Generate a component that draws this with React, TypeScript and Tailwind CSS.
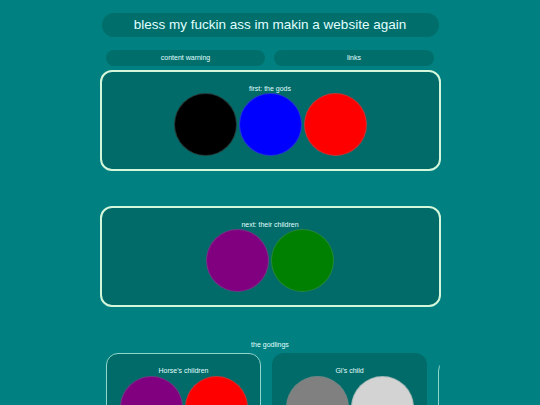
const font = { fontFamily: '"Liberation Sans", Arial, sans-serif' };

function Circle({ color }: { color: string }) {
  return <div className={`w-[63px] h-[63px] rounded-full shrink-0 border border-[#5a8f8c]/40 ${color}`} />;
}

function Section({ label, colors }: { label: string; colors: string[] }) {
  return (
    <div className="w-[341px] h-[101px] mx-auto rounded-[12px] border-2 border-[#d4f7dc] bg-[#006b68] flex flex-col items-center pt-[12px]">
      <p className="text-[7px] leading-[10px] text-[#e0ffff]">{label}</p>
      <div className="flex gap-[2px] mt-[-1px]">
        {colors.map((c) => (
          <Circle key={c} color={c} />
        ))}
      </div>
    </div>
  );
}

function Card({ label, colors, border }: { label: string; colors: string[]; border?: boolean }) {
  return (
    <div
      className={`w-[155px] h-[80px] shrink-0 rounded-[12px] bg-[#006b68] flex flex-col items-center pt-[12px] border ${
        border ? 'border-[#8fd6cc]' : 'border-transparent'
      }`}
    >
      <p className="text-[7px] leading-[10px] text-[#e0ffff]">{label}</p>
      <div className="flex gap-[2px]">
        {colors.map((c) => (
          <Circle key={c} color={c} />
        ))}
      </div>
    </div>
  );
}

export default function App() {
  return (
    <div className="w-[540px] h-[405px] overflow-hidden bg-[#008080] text-[#e0ffff]" style={font}>
      <div className="pt-[13px] flex flex-col items-center">
        <h1 className="w-[337px] h-[24px] rounded-full bg-[#006e6b] flex items-center justify-center text-[13.5px] font-normal text-[#e0ffff]">
          bless my fuckin ass im makin a website again
        </h1>
        <div className="flex gap-[9px] mt-[13px]">
          <div className="w-[159px] h-[16px] rounded-full bg-[#006e6b] flex items-center justify-center text-[7px]">
            content warning
          </div>
          <div className="w-[160px] h-[16px] rounded-full bg-[#006e6b] flex items-center justify-center text-[7px]">
            links
          </div>
        </div>
      </div>
      <div className="mt-[4px]">
        <Section label="first: the gods" colors={['bg-black', 'bg-[#0000ff]', 'bg-[#ff0000]']} />
      </div>
      <div className="mt-[35px]">
        <Section label="next: their children" colors={['bg-[#800080]', 'bg-[#008000]']} />
      </div>
      <p className="mt-[33px] text-center text-[7px] leading-[10px]">the godlings</p>
      <div className="w-[340px] mx-auto mt-[3px] overflow-hidden flex gap-[11px] pl-[6px]">
        <Card label="Horse's children" colors={['bg-[#800080]', 'bg-[#ff0000]']} border />
        <Card label="Gi's child" colors={['bg-[#808080]', 'bg-[#d3d3d3]']} />
        <div className="w-[155px] h-[80px] shrink-0 rounded-[12px] border border-[#8fd6cc] mt-[6px]" />
      </div>
    </div>
  );
}
